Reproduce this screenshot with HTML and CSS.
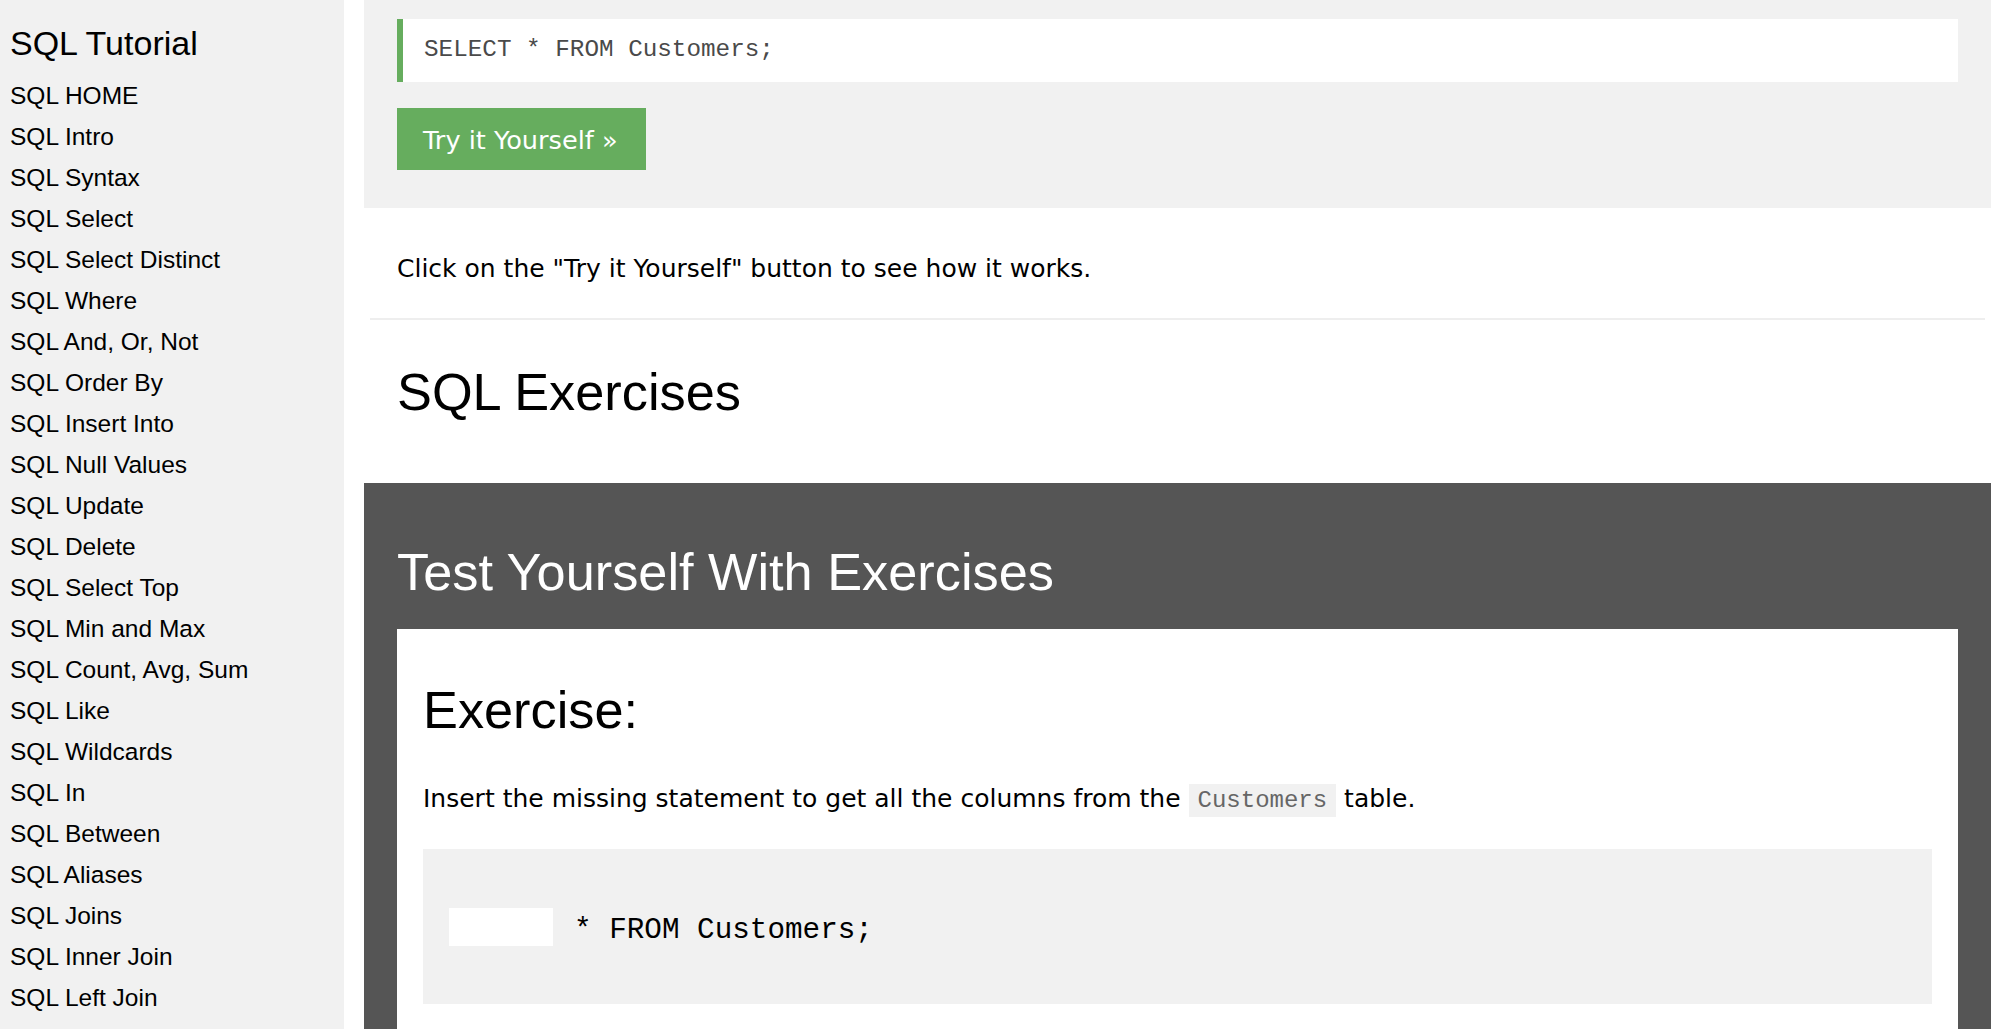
FILE: index.html
```html
<!DOCTYPE html>
<html lang="en">
<head>
<meta charset="utf-8">
<title>SQL Tutorial</title>
<link rel="stylesheet" href="styles.css">
</head>
<body>
<div class="page">
  <nav class="sidebar">
    <h4 class="side-title">SQL Tutorial</h4>
    <a class="side-link" href="#">SQL HOME</a>
    <a class="side-link" href="#">SQL Intro</a>
    <a class="side-link" href="#">SQL Syntax</a>
    <a class="side-link" href="#">SQL Select</a>
    <a class="side-link" href="#">SQL Select Distinct</a>
    <a class="side-link" href="#">SQL Where</a>
    <a class="side-link" href="#">SQL And, Or, Not</a>
    <a class="side-link" href="#">SQL Order By</a>
    <a class="side-link" href="#">SQL Insert Into</a>
    <a class="side-link" href="#">SQL Null Values</a>
    <a class="side-link" href="#">SQL Update</a>
    <a class="side-link" href="#">SQL Delete</a>
    <a class="side-link" href="#">SQL Select Top</a>
    <a class="side-link" href="#">SQL Min and Max</a>
    <a class="side-link" href="#">SQL Count, Avg, Sum</a>
    <a class="side-link" href="#">SQL Like</a>
    <a class="side-link" href="#">SQL Wildcards</a>
    <a class="side-link" href="#">SQL In</a>
    <a class="side-link" href="#">SQL Between</a>
    <a class="side-link" href="#">SQL Aliases</a>
    <a class="side-link" href="#">SQL Joins</a>
    <a class="side-link" href="#">SQL Inner Join</a>
    <a class="side-link" href="#">SQL Left Join</a>
  </nav>
  <main class="main">
    <div class="example">
      <div class="code-box">SELECT * FROM Customers;</div>
      <a class="try-btn" href="#">Try it Yourself &raquo;</a>
    </div>
    <p class="body-text click-text">Click on the "Try it Yourself" button to see how it works.</p>
    <hr class="divider">
    <h2 class="heading">SQL Exercises</h2>
    <div class="exercises">
      <h2 class="heading heading-white">Test Yourself With Exercises</h2>
      <div class="card">
        <h2 class="heading">Exercise:</h2>
        <p class="body-text task">Insert the missing statement to get all the columns from the <code class="inline-code">Customers</code> table.</p>
        <div class="ex-box">
          <span class="blank"></span>
          <span class="ex-code">* FROM Customers;</span>
        </div>
      </div>
    </div>
  </main>
</div>
</body>
</html>
```

FILE: styles.css
```css
html, body {
  margin: 0;
  padding: 0;
  background: #ffffff;
  overflow: hidden;
}

.page {
  display: flex;
  align-items: flex-start;
  height: 1029px;
  overflow: hidden;
}

.sidebar {
  width: 344px;
  flex: 0 0 344px;
  height: 1029px;
  background: #f1f1f1;
  display: flex;
  flex-direction: column;
  font-family: "Liberation Sans", Arial, sans-serif;
  color: #000;
  overflow: hidden;
}

.side-title {
  margin: 0 0 7px 0;
  padding: 18px 0 0 10px;
  font-size: 34px;
  font-weight: normal;
  line-height: 50px;
}

.side-link {
  display: block;
  padding-left: 10px;
  font-size: 24.5px;
  line-height: 41px;
  height: 41px;
  color: #000;
  text-decoration: none;
  white-space: nowrap;
}

.main {
  flex: 1 1 auto;
  margin: 0 9px 0 20px;
  display: flex;
  flex-direction: column;
  min-width: 0;
}

.example {
  background: #f1f1f1;
  padding: 19px 33px 38px 33px;
  display: flex;
  flex-direction: column;
  align-items: flex-start;
}

.code-box {
  align-self: stretch;
  background: #ffffff;
  border-left: 6px solid #66ad5e;
  height: 63px;
  line-height: 61px;
  padding-left: 21px;
  font-family: "Liberation Mono", "Courier New", monospace;
  font-size: 24.3px;
  color: #4a4a4a;
}

.try-btn {
  margin-top: 26px;
  width: 249px;
  height: 62px;
  box-sizing: border-box;
  padding-left: 26px;
  background: #66ad5e;
  color: #ffffff;
  text-decoration: none;
  font-family: "DejaVu Sans", Verdana, sans-serif;
  font-size: 25.6px;
  line-height: 65px;
  white-space: nowrap;
  overflow: hidden;
}

.body-text {
  font-family: "DejaVu Sans", Verdana, sans-serif;
  font-size: 25px;
  line-height: 40px;
  color: #000;
  margin: 0;
}

.click-text {
  padding-left: 33px;
  margin-top: 41px;
}

.divider {
  border: 0;
  height: 2px;
  background: #eeeeee;
  margin: 29px 6px 0 6px;
}

.heading {
  font-family: "Liberation Sans", Arial, sans-serif;
  font-weight: normal;
  font-size: 52.3px;
  line-height: 60px;
  margin: 0;
  color: #000;
}

.main > .heading {
  padding-left: 33px;
  margin-top: 42px;
  margin-bottom: 61px;
}

.exercises {
  background: #555555;
  padding: 59px 33px 40px 33px;
  display: flex;
  flex-direction: column;
}

.heading-white {
  color: #ffffff;
  margin-bottom: 27px;
}

.card {
  background: #ffffff;
  padding: 51px 26px 40px 26px;
  display: flex;
  flex-direction: column;
}

.task {
  margin-top: 39px;
  white-space: nowrap;
}

.inline-code {
  font-family: "Liberation Mono", "Courier New", monospace;
  font-size: 24px;
  color: #666666;
  background: #f1f1f1;
  padding: 3px 9px;
}

.ex-box {
  margin-top: 28px;
  background: #f1f1f1;
  height: 155px;
  display: flex;
  align-items: center;
  padding-left: 26px;
  gap: 21px;
}

.blank {
  display: block;
  width: 104px;
  height: 38px;
  background: #ffffff;
}

.ex-code {
  font-family: "Liberation Mono", "Courier New", monospace;
  font-size: 29.3px;
  color: #000;
  padding-top: 7px;
}
```
